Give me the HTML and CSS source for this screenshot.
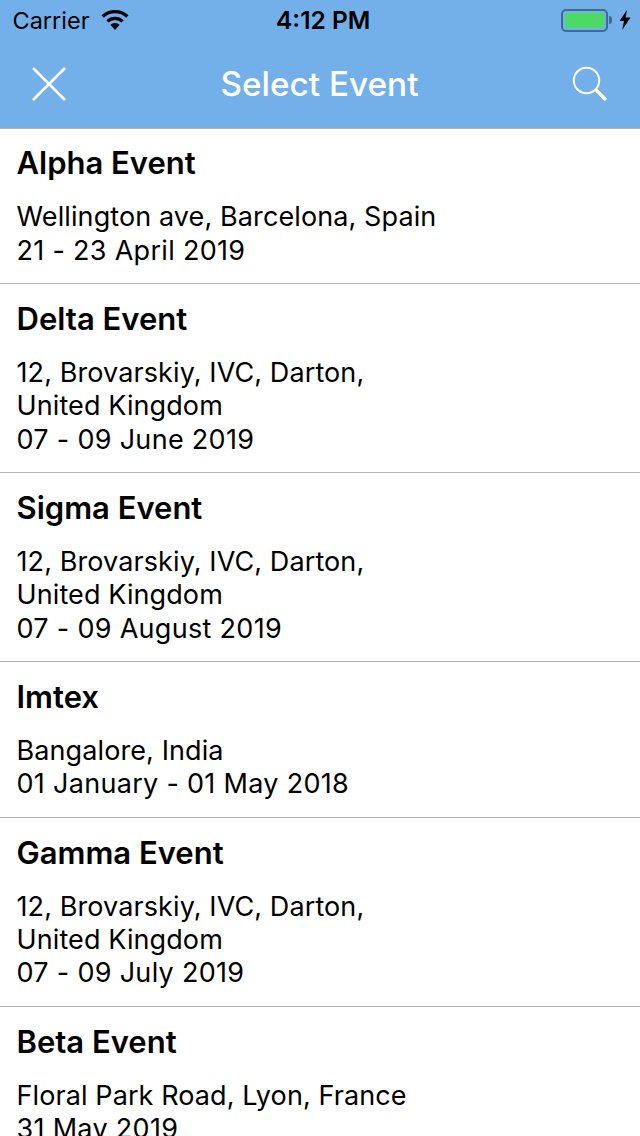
FILE: index.html
```html
<!DOCTYPE html>
<html lang="en">
<head>
    <meta charset="UTF-8">
    <meta name="viewport" content="width=device-width, initial-scale=1.0">
    <title>Select Event</title>
    <link rel="stylesheet" href="styles.css">
</head>
<body>
    <div class="header">
        <div class="status-bar">
            <div class="status-left">
                <span class="carrier">Carrier</span>
                <svg class="wifi" width="30" height="22" viewBox="0 0 30 22">
                    <path d="M15 21 L10.4 15.8 A6.8 6.8 0 0 1 19.6 15.8 Z" fill="#000"/>
                    <path d="M7.4 12.4 A11.2 11.2 0 0 1 22.6 12.4" fill="none" stroke="#000" stroke-width="3.2"/>
                    <path d="M2.6 7.6 A18 18 0 0 1 27.4 7.6" fill="none" stroke="#000" stroke-width="3.4"/>
                </svg>
            </div>
            <span class="clock">4:12 PM</span>
            <div class="status-right">
                <div class="battery"><div class="battery-fill"></div></div>
                <div class="battery-cap"></div>
                <svg class="bolt" width="12" height="20" viewBox="0 0 12 20">
                    <path d="M8 0 L0.5 11 H5 L3.2 20 L11.5 7.6 H6.6 Z" fill="#000"/>
                </svg>
            </div>
        </div>
        <div class="nav-bar">
            <svg class="nav-icon" width="36" height="36" viewBox="0 0 36 36">
                <path d="M2 2 L34 34 M34 2 L2 34" fill="none" stroke="#fff" stroke-width="2.6"/>
            </svg>
            <span class="nav-title">Select Event</span>
            <svg class="nav-icon" width="36" height="36" viewBox="0 0 36 36">
                <circle cx="14.5" cy="14.5" r="12.7" fill="none" stroke="#fff" stroke-width="2"/>
                <path d="M23.5 23.5 L34 34" fill="none" stroke="#fff" stroke-width="3.4"/>
            </svg>
        </div>
    </div>

    <div class="event-list">
        <div class="event">
            <div class="event-name">Alpha Event</div>
            <div class="event-info">Wellington ave, Barcelona, Spain<br><span class="event-date">21 - 23 April 2019</span></div>
        </div>
        <div class="event">
            <div class="event-name">Delta Event</div>
            <div class="event-info">12, Brovarskiy, IVC, Darton,<br>United Kingdom<br><span class="event-date">07 - 09 June 2019</span></div>
        </div>
        <div class="event">
            <div class="event-name">Sigma Event</div>
            <div class="event-info">12, Brovarskiy, IVC, Darton,<br>United Kingdom<br><span class="event-date">07 - 09 August 2019</span></div>
        </div>
        <div class="event">
            <div class="event-name">Imtex</div>
            <div class="event-info">Bangalore, India<br><span class="event-date">01 January - 01 May 2018</span></div>
        </div>
        <div class="event">
            <div class="event-name">Gamma Event</div>
            <div class="event-info">12, Brovarskiy, IVC, Darton,<br>United Kingdom<br><span class="event-date">07 - 09 July 2019</span></div>
        </div>
        <div class="event">
            <div class="event-name">Beta Event</div>
            <div class="event-info">Floral Park Road, Lyon, France<br><span class="event-date">31 May 2019</span></div>
        </div>
    </div>
</body>
</html>
```

FILE: styles.css
```css
html, body {
    height: 1136px;
    overflow: hidden;
}
body {
    font-family: Inter, "Liberation Sans", sans-serif;
    margin: 0;
    background-color: #fff;
    color: #000;
}
.header {
    background-color: #73b0e9;
    border-bottom: 1px solid #b2b2b2;
    height: 127.8px;
}
.status-bar {
    display: flex;
    justify-content: space-between;
    align-items: center;
    height: 40px;
    padding: 0 9px 0 12.5px;
    position: relative;
}
.status-left, .status-right {
    display: flex;
    align-items: center;
}
.carrier {
    font-size: 23.5px;
    margin-right: 10px;
}
.clock {
    font-size: 24.5px;
    font-weight: 600;
    position: absolute;
    left: 276px;
}
.battery {
    width: 47px;
    height: 23px;
    border: 2px solid #3f6a93;
    border-radius: 5px;
    padding: 2px;
    box-sizing: border-box;
}
.battery-fill {
    height: 100%;
    background-color: #4cd964;
    border-radius: 1px;
}
.battery-cap {
    width: 3px;
    height: 8px;
    margin-left: 1px;
    margin-right: 7px;
    background-color: #3f6a93;
    border-radius: 0 3px 3px 0;
}
.nav-bar {
    display: flex;
    justify-content: space-between;
    align-items: center;
    height: 87px;
    padding: 0 32px 0 31px;
}
.nav-title {
    color: #fff;
    font-size: 33.3px;
    font-weight: 500;
}
.event {
    border-bottom: 1px solid #b2b2b2;
    padding: 16.6px 16.5px 16.2px;
}
.event-name {
    font-size: 31px;
    font-weight: 600;
    line-height: 36px;
    margin-bottom: 19px;
}
.event-info {
    font-size: 27px;
    line-height: 33.4px;
    letter-spacing: 0.1px;
}
.event-date {
    letter-spacing: 0.3px;
}
```
